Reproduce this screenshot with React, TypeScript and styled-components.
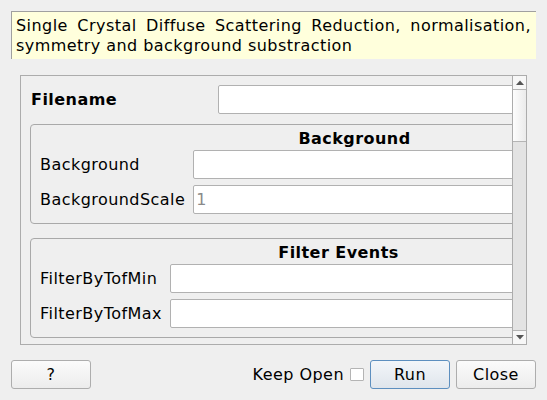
import React from "react";
import styled, { createGlobalStyle } from "styled-components";

const Global = createGlobalStyle`
  html, body { margin: 0; padding: 0; background: #efefef; }
  body {
    font-family: "DejaVu Sans", "Liberation Sans", sans-serif;
    font-size: 16px;
    letter-spacing: 0.45px;
    color: #000;
  }
  * { box-sizing: border-box; }
`;

const Dialog = styled.div`
  width: 547px;
  height: 400px;
  padding: 11px 11px 0 11px;
  display: flex;
  flex-direction: column;
  background: #efefef;
  overflow: hidden;
`;

const Description = styled.div`
  height: 48px;
  flex: none;
  border-top: 1px solid #a0a0a0;
  border-left: 1px solid #a0a0a0;
  background: #ffffdc;
  padding: 4px 5px 0 4px;
  text-align: justify;
  line-height: 19.5px;
`;

const ScrollFrame = styled.div`
  margin: 16px 0 0 9px;
  width: 507px;
  height: 270px;
  flex: none;
  border: 1px solid #acacac;
  display: flex;
`;

const Viewport = styled.div`
  flex: 1;
  overflow: hidden;
  position: relative;
`;

const Content = styled.div`
  width: 700px;
  padding: 9px 0 0 9px;
  display: flex;
  flex-direction: column;
`;

const PropRow = styled.div`
  display: grid;
  grid-template-columns: 180px 1fr;
  column-gap: 8px;
  align-items: center;
  margin-bottom: 10px;
`;

const RequiredLabel = styled.label`
  font-weight: bold;
  padding-left: 1px;
`;

const Field = styled.input`
  height: 29px;
  width: 100%;
  border: 1px solid #b1b1b1;
  border-radius: 2px;
  background: #fff;
  font: inherit;
  letter-spacing: inherit;
  color: #8a8a8a;
  padding: 0 2px;
  margin: 0;
  outline: none;
`;

const Group = styled.fieldset<{ $width: number }>`
  width: ${(p) => p.$width}px;
  margin: 0 0 14px 0;
  border: 1px solid #a9a9a9;
  border-radius: 4px;
  padding: 4px 8px 9px 9px;
  min-width: 0;
`;

const GroupTitle = styled.div`
  text-align: center;
  font-weight: bold;
  line-height: 19px;
  margin-bottom: 2px;
`;

const Fields = styled.div`
  display: grid;
  grid-template-columns: auto 1fr;
  column-gap: 8px;
  row-gap: 6px;
  align-items: center;
`;

const ScrollBar = styled.div`
  width: 14px;
  flex: none;
  border-left: 1px solid #acacac;
  display: flex;
  flex-direction: column;
`;

const ArrowButton = styled.div<{ $down?: boolean }>`
  height: 14px;
  flex: none;
  background: #f7f7f7;
  ${(p) =>
    p.$down ? "border-top: 1px solid #b4b4b4;" : "border-bottom: 1px solid #b4b4b4;"}
  display: flex;
  align-items: center;
  justify-content: center;
`;

const Handle = styled.div`
  height: 52px;
  flex: none;
  background: linear-gradient(to right, #fdfdfd, #ebebeb);
  border-bottom: 1px solid #b4b4b4;
`;

const Track = styled.div`
  flex: 1;
  background: #e3e3e3;
`;

const ButtonRow = styled.div`
  margin-top: 15px;
  display: flex;
  align-items: center;
`;

const Spacer = styled.div`
  flex: 1;
`;

const Button = styled.button<{ $default?: boolean }>`
  width: 80px;
  height: 29px;
  margin: 0;
  padding: 0;
  font: inherit;
  letter-spacing: inherit;
  color: #000;
  border-radius: 3px;
  border: 1px solid ${(p) => (p.$default ? "#5d8fbf" : "#adadad")};
  background: ${(p) =>
    p.$default
      ? "linear-gradient(#f3f6f9, #dfe5ec)"
      : "linear-gradient(#fbfbfb, #ececec)"};
  & + & {
    margin-left: 6px;
  }
`;

const KeepOpen = styled.label`
  display: flex;
  align-items: center;
  gap: 6px;
  margin-right: 6px;
`;

const Check = styled.input`
  appearance: none;
  width: 14px;
  height: 13px;
  margin: 0;
  border: 1px solid #b4b4b4;
  border-radius: 1px;
  background: #fff;
`;

const Arrow = ({ down }: { down?: boolean }) => (
  <svg width="8" height="5" viewBox="0 0 8 5">
    <polygon points={down ? "0,0 8,0 4,4.5" : "4,0.5 8,5 0,5"} fill="#555" />
  </svg>
);

export default function App() {
  return (
    <>
      <Global />
      <Dialog>
        <Description>
          Single Crystal Diffuse Scattering Reduction, normalisation, symmetry and
          background substraction
        </Description>
        <ScrollFrame>
          <Viewport>
            <Content>
              <PropRow>
                <RequiredLabel>Filename</RequiredLabel>
                <Field readOnly />
              </PropRow>
              <Group $width={648}>
                <GroupTitle>Background</GroupTitle>
                <Fields>
                  <label>Background</label>
                  <Field readOnly />
                  <label>BackgroundScale</label>
                  <Field readOnly defaultValue="1" />
                </Fields>
              </Group>
              <Group $width={616}>
                <GroupTitle>Filter Events</GroupTitle>
                <Fields>
                  <label>FilterByTofMin</label>
                  <Field readOnly />
                  <label>FilterByTofMax</label>
                  <Field readOnly />
                </Fields>
              </Group>
            </Content>
          </Viewport>
          <ScrollBar>
            <ArrowButton>
              <Arrow />
            </ArrowButton>
            <Handle />
            <Track />
            <ArrowButton $down>
              <Arrow down />
            </ArrowButton>
          </ScrollBar>
        </ScrollFrame>
        <ButtonRow>
          <Button>?</Button>
          <Spacer />
          <KeepOpen>
            Keep Open
            <Check type="checkbox" />
          </KeepOpen>
          <Button $default>Run</Button>
          <Button>Close</Button>
        </ButtonRow>
      </Dialog>
    </>
  );
}
